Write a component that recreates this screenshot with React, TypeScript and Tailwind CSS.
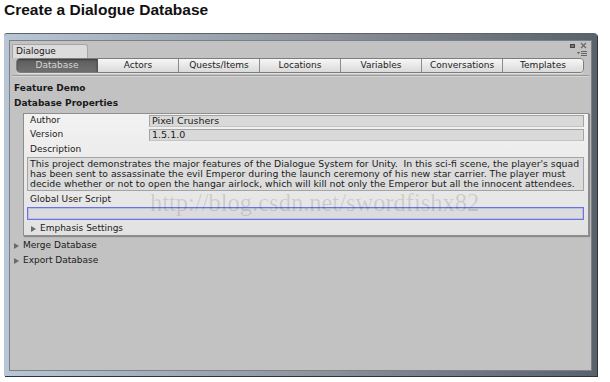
import React from "react";

const tabs = ["Database", "Actors", "Quests/Items", "Locations", "Variables", "Conversations", "Templates"];

const Fold = ({ label, className = "" }: { label: string; className?: string }) => (
  <div className={"flex items-center h-[15px] " + className}>
    <span className="w-0 h-0 border-y-[3.5px] border-y-transparent border-l-[5px] border-l-[#6a6a6a] mr-[4px]" />
    <span>{label}</span>
  </div>
);

const Field = ({ label, value }: { label: string; value: string }) => (
  <div className="flex items-center h-[14px] pl-[6px] pr-[4px]">
    <span className="w-[119px]">{label}</span>
    <div className="flex-1 h-[12px] bg-[#d9d9d9] border border-[#a3a3a3] border-b-[#c4c4c4] px-[2px] leading-[10px] text-[9.5px]">
      {value}
    </div>
  </div>
);

export default function App() {
  return (
    <div className="w-[610px] h-[382px] bg-white relative overflow-hidden">
      <h1 className="pl-[4px] pt-[1px] text-[15.5px] leading-[18px] font-bold text-[#111] font-['Liberation_Sans',Arial,sans-serif]">
        Create a Dialogue Database
      </h1>

      {/* window frame */}
      <div className="ml-[4px] mt-[14px] w-[593px] h-[343px] rounded-t-[3px] border-t-[1px] border-t-[#5e6369] bg-gradient-to-r from-[#b9c6d6] via-[#8f969e] to-[#59616b] p-[5px] pt-[6px] shadow-[1px_1px_0_#2f343a]">
        <div className="w-full h-full bg-[#c2c2c2] border border-[#7b8088] relative font-['DejaVu_Sans',sans-serif] text-[9px] text-[#1a1a1a]">
          {/* Dialogue tab + window icons */}
          <div className="flex items-end h-[17px] pl-[2px]">
            <div className="w-[76px] h-[14px] bg-[#dcdcdc] border border-b-0 border-[#a6a6a6] rounded-tr-[3px] pl-[3px] leading-[13px]">
              Dialogue
            </div>
          </div>
          <div className="absolute right-[4px] top-[1px] flex flex-col items-end gap-[2px]">
            <div className="flex items-center gap-[5px]">
              <div className="w-[5px] h-[4px] border border-[#444] bg-[#777]" />
              <svg width="7" height="7" viewBox="0 0 7 7">
                <path d="M1 1 L6 6 M6 1 L1 6" stroke="#666" strokeWidth="1.1" />
              </svg>
            </div>
            <svg width="10" height="5" viewBox="0 0 10 5">
              <path d="M0 1 L3 1 L1.5 3 Z" fill="#555" />
              <rect x="4" y="0" width="6" height="1" fill="#666" />
              <rect x="4" y="2" width="6" height="1" fill="#666" />
              <rect x="4" y="4" width="6" height="1" fill="#666" />
            </svg>
          </div>

          {/* toolbar */}
          <div className="ml-[6px] w-[568px] h-[15px] flex border border-[#7d7d7d] rounded-[4px] overflow-hidden shadow-[0_1px_0_#e0e0e0]">
            {tabs.map((t, i) => (
              <div
                key={t}
                className={
                  "flex-1 flex items-center justify-center border-r last:border-r-0 " +
                  (i === 0
                    ? "bg-gradient-to-b from-[#5d5d5d] to-[#707070] text-[#d6d6d6] border-[#555] shadow-[inset_0_1px_2px_#3a3a3a]"
                    : "bg-gradient-to-b from-[#f6f6f6] to-[#dadada] text-[#222] border-[#8c8c8c]")
                }
              >
                {t}
              </div>
            ))}
          </div>
          <div className="mt-[2px] mx-[2px] h-[1px] bg-[#9c9c9c] shadow-[0_1px_0_#d4d4d4]" />

          <div className="pl-[4px] pt-[5px] font-bold leading-[15px]">
            <div>Feature Demo</div>
            <div>Database Properties</div>
          </div>

          {/* properties panel */}
          <div className="ml-[13px] mr-[2px] mt-[2px] h-[123px] bg-gradient-to-b from-[#f2f2f2] to-[#e2e2e2] border border-[#8e8e8e] shadow-[1px_1px_1px_#8a8a8a]">
            <Field label="Author" value="Pixel Crushers" />
            <Field label="Version" value="1.5.1.0" />
            <div className="pl-[6px] h-[15px] leading-[15px]">Description</div>
            <div className="ml-[3px] mr-[4px] h-[34px] bg-[#dcdcdc] border border-[#a3a3a3] px-[2px] pt-[1px] text-[9.3px] leading-[10px] whitespace-nowrap overflow-hidden">
              This project demonstrates the major features of the Dialogue System for Unity.&nbsp; In this sci-fi scene, the player's squad
              <br />
              has been sent to assassinate the evil Emperor during the launch ceremony of his new star carrier. The player must
              <br />
              decide whether or not to open the hangar airlock, which will kill not only the Emperor but all the innocent attendees.
            </div>
            <div className="pl-[6px] h-[16px] leading-[16px]">Global User Script</div>
            <div className="ml-[3px] mr-[4px] h-[13px] bg-[#dcdcdc] border border-[#6c73dc] shadow-[inset_0_0_0_1px_#b9bde8]" />
            <Fold label="Emphasis Settings" className="pl-[7px] mt-[1px]" />
          </div>

          <div className="pl-[4px] pt-[2px]">
            <Fold label="Merge Database" />
            <Fold label="Export Database" />
          </div>

          {/* watermark */}
          <div className="absolute left-[140px] top-[150px] text-[24.5px] leading-none font-['Liberation_Serif',serif] text-black/[0.12] pointer-events-none whitespace-nowrap">
            http://blog.csdn.net/swordfishx82
          </div>
        </div>
      </div>
    </div>
  );
}
